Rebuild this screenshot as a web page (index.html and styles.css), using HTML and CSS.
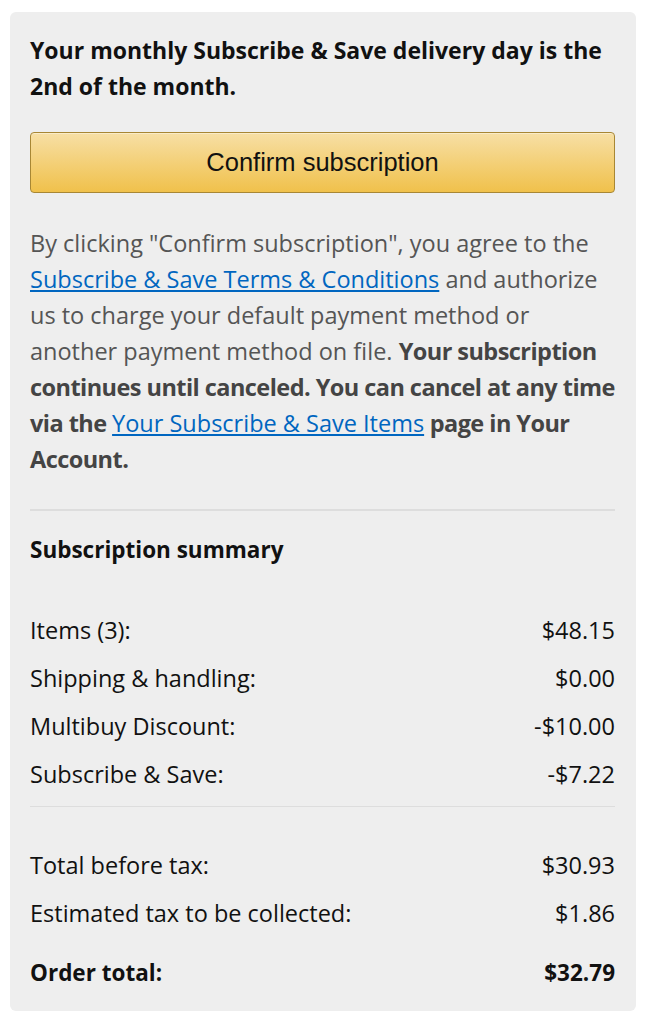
FILE: index.html
```html
<!DOCTYPE html>
<html>
<head>
<meta charset="utf-8">
<link rel="stylesheet" href="styles.css">
</head>
<body>
<div class="card">
  <p class="headline">Your monthly Subscribe &amp; Save delivery day is the<br>2nd of the month.</p>
  <button class="confirm">Confirm subscription</button>
  <p class="legal">By clicking "Confirm subscription", you agree to the<br><a href="#">Subscribe &amp; Save Terms &amp; Conditions</a> and authorize<br>us to charge your default payment method or<br>another payment method on file. <b>Your subscription<br>continues until canceled. You can cancel at any time<br>via the <a href="#">Your Subscribe &amp; Save Items</a> page in Your<br>Account.</b></p>
  <hr class="divider">
  <h2 class="summary-title">Subscription summary</h2>
  <div class="rows first">
    <div class="row"><span>Items (3):</span><span>$48.15</span></div>
    <div class="row"><span>Shipping &amp; handling:</span><span>$0.00</span></div>
    <div class="row"><span>Multibuy Discount:</span><span>-$10.00</span></div>
    <div class="row"><span>Subscribe &amp; Save:</span><span>-$7.22</span></div>
  </div>
  <hr class="divider thin">
  <div class="rows second">
    <div class="row"><span>Total before tax:</span><span>$30.93</span></div>
    <div class="row"><span>Estimated tax to be collected:</span><span>$1.86</span></div>
    <div class="row total"><span>Order total:</span><span>$32.79</span></div>
  </div>
</div>
</body>
</html>
```
FILE: styles.css
```css
html, body {
  margin: 0;
  padding: 0;
  background: #ffffff;
}
body {
  font-family: "Open Sans", "Noto Sans", sans-serif;
  color: #111111;
}
.card {
  margin: 12px 12px 0 10px;
  padding: 20px 21px 20px 20px;
  background: #eeeeee;
  border-radius: 6px;
}
.headline {
  margin: 0;
  font-size: 23px;
  line-height: 36px;
  font-weight: 700;
  color: #111111;
  white-space: nowrap;
}
.confirm {
  display: block;
  width: 100%;
  height: 61px;
  margin: 28px 0 0;
  border: 1px solid #a88734;
  border-radius: 4px;
  background: linear-gradient(to bottom, #f7dfa5, #f0c14b);
  box-shadow: inset 0 1px 0 rgba(255,255,255,0.4);
  font-family: "Liberation Sans", Arial, sans-serif;
  font-size: 25.5px;
  color: #111111;
}
.legal {
  margin: 32px 0 0;
  font-size: 23.5px;
  line-height: 36px;
  color: #555555;
  white-space: nowrap;
}
.legal b {
  color: #444444;
  letter-spacing: -0.55px;
}
.legal a {
  color: #0066c0;
  text-decoration: underline;
  font-weight: 400;
}
.legal b a {
  letter-spacing: 0;
}
.divider {
  margin: 32px 0 0;
  border: 0;
  height: 2px;
  background: #dddddd;
}
.divider.thin {
  height: 1px;
  margin-top: 14px;
}
.summary-title {
  margin: 21px 0 0;
  font-size: 22.5px;
  line-height: 36px;
  font-weight: 700;
}
.rows {
  display: flex;
  flex-direction: column;
  gap: 12px;
  font-size: 23.5px;
  line-height: 36px;
}
.rows.first {
  margin-top: 44px;
}
.rows.second {
  margin-top: 40px;
}
.row {
  display: flex;
  justify-content: space-between;
}
.row.total {
  margin-top: 12px;
  font-weight: 700;
  font-size: 22.5px;
}
```
